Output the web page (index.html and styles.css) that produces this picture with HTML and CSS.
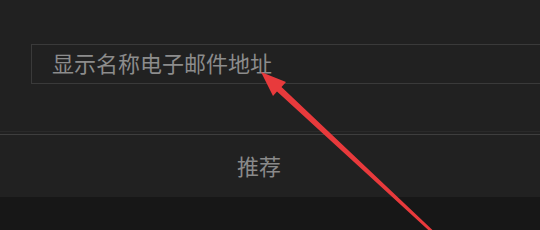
FILE: index.html
```html
<!DOCTYPE html>
<html lang="zh-CN">
<head>
  <meta charset="UTF-8" />
  <meta name="viewport" content="width=device-width, initial-scale=1.0"/>
  <title>显示名称</title>
  <link rel="stylesheet" href="styles.css">
</head>
<body>
  <div class="panel">
    <div class="field-row">
      <div class="field">显示名称电子邮件地址</div>
    </div>
    <div class="suggest">推荐</div>
    <div class="footer"></div>
  </div>

  <!-- annotation arrow -->
  <svg class="arrow" width="540" height="230" viewBox="0 0 540 230">
    <polygon fill="#e83a3c"
      points="261,72 286,82 281.5,87 433,230.5 431,232.5 277,91.5 273,96" />
  </svg>
</body>
</html>
```

FILE: styles.css
```css
body {
  margin: 0;
  background: #212121;
  font-family: "Noto Sans CJK SC", "Noto Sans", sans-serif;
  width: 540px;
  height: 230px;
  overflow: hidden;
  position: relative;
}

.panel {
  display: flex;
  flex-direction: column;
  height: 230px;
}

.field-row {
  padding: 44px 0 0 31px;
  height: 132px;
  border-bottom: 1px solid #2a2a2a;
  box-sizing: border-box;
  margin-bottom: 2px;
}

.field {
  height: 40px;
  box-sizing: border-box;
  border: 1px solid #3a3a3a;
  border-right: none;
  padding-left: 20px;
  font-size: 22px;
  line-height: 34px;
  color: #8c8c8c;
  white-space: nowrap;
}

.suggest {
  height: 63px;
  box-sizing: border-box;
  line-height: 60px;
  text-align: center;
  padding-right: 22px;
  font-size: 22px;
  color: #8a8a8a;
  border-top: 1px solid #3e3e3e;
}

.footer {
  flex: 1;
  background: #171717;
}

.arrow {
  position: absolute;
  left: 0;
  top: 0;
}
```
